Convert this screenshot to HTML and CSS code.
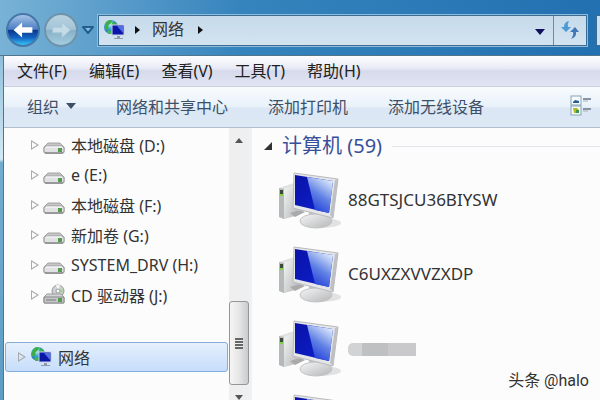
FILE: index.html
```html
<!DOCTYPE html>
<html lang="zh-CN">
<head>
    <meta charset="UTF-8">
    <meta name="viewport" content="width=device-width, initial-scale=1.0">
    <title>网络</title>
    <link rel="stylesheet" href="styles.css">
</head>
<body>
    <!-- Shared icons -->
    <svg class="sprite" aria-hidden="true">
        <defs>
            <linearGradient id="screen" x1="0" y1="0" x2="1" y2="1">
                <stop offset="0" stop-color="#0a12a8"/>
                <stop offset="1" stop-color="#0d22d0"/>
            </linearGradient>
            <linearGradient id="shine" x1="0.2" y1="1" x2="0.7" y2="0">
                <stop offset="0" stop-color="#1a35d8"/>
                <stop offset="0.5" stop-color="#5f80e4"/>
                <stop offset="1" stop-color="#dde9fc"/>
            </linearGradient>
            <linearGradient id="metal" x1="0" y1="0" x2="1" y2="1">
                <stop offset="0" stop-color="#f6f6f6"/>
                <stop offset="1" stop-color="#b4b6b8"/>
            </linearGradient>
            <radialGradient id="globe" cx="0.4" cy="0.3" r="0.7">
                <stop offset="0" stop-color="#c8f0f8"/>
                <stop offset="0.5" stop-color="#35a5d8"/>
                <stop offset="1" stop-color="#1659a8"/>
            </radialGradient>
            <linearGradient id="drive-top" x1="0" y1="0" x2="0" y2="1">
                <stop offset="0" stop-color="#bdbdbd"/>
                <stop offset="1" stop-color="#f4f4f4"/>
            </linearGradient>
        </defs>
        <symbol id="icon-drive" viewBox="0 0 22 20">
            <path d="M5 8h12l4 4v5q0 1-1 1H2q-1 0-1-1v-5z" fill="url(#drive-top)" stroke="#a6a6a6"/>
            <rect x="1" y="11" width="20" height="7" rx="2" fill="#e0e1e3" stroke="#96999c"/>
            <path d="M3 12h16" stroke="#fff"/>
            <rect x="15" y="13" width="4" height="4" fill="#589a50"/>
            <path d="M2 18h18" stroke="#77797b"/>
        </symbol>
        <symbol id="icon-cd" viewBox="0 0 22 20">
            <circle cx="15" cy="6" r="6" fill="#cdd2d4" stroke="#999"/>
            <path d="M15 6L13 0h4zM15 6l-2 6h4z" fill="#f5f8f5"/>
            <path d="M15 6l5-3v6z" fill="#b5cfae"/>
            <circle cx="15" cy="6" r="2" fill="#fff" stroke="#999"/>
            <path d="M4 9h14l3 3v6H1v-6z" fill="#d2d4d5" stroke="#999"/>
            <rect x="1" y="12" width="20" height="6" rx="1" fill="#c4c7c8" stroke="#858889"/>
            <path d="M3 15h10" stroke="#777"/>
            <rect x="15" y="13" width="4" height="4" fill="#589a50"/>
        </symbol>
        <symbol id="icon-network" viewBox="0 0 22 22">
            <circle cx="8" cy="8" r="7" fill="url(#globe)"/>
            <path d="M2 6q1-5 6-5 2 1 0 3T5 7l1 2-3 2q-2-2-1-5zM10 2q3 1 4 4l-3 1-2-2z" fill="#3fae49"/>
            <path d="M5 11l4 1v3q-4 0-5-2z" fill="#45b35a"/>
            <rect x="9" y="6" width="12" height="10" fill="#0b16a8" stroke="#c9d0e2"/>
            <path d="M14 7h6v7z" fill="#506fe4"/>
            <path d="M14 17h3v2h3v1h-9v-1h3z" fill="#909aa8"/>
        </symbol>
        <symbol id="icon-computer" viewBox="0 0 64 58">
            <ellipse cx="43" cy="51" rx="20" ry="5" fill="#e2e2e2"/>
            <path d="M1 16l15-5 5 4v28L6 47l-5-2z" fill="#e0e1e1"/>
            <path d="M1 16l5 1v30l-5-2z" fill="#b6b9ba"/>
            <path d="M6 17l14-5v31L6 47z" fill="url(#metal)"/>
            <rect x="2" y="18" width="3" height="4" fill="#3c4a3a"/>
            <rect x="2" y="22" width="3" height="2" fill="#7ed04e"/>
            <path d="M12 41l10-3 5 2-10 5z" fill="#aaa"/>
            <path d="M31 38l14 3v9H31z" fill="#bfc1c3"/>
            <ellipse cx="38" cy="49" rx="16" ry="7" fill="url(#metal)" stroke="#c4c4c4"/>
            <path d="M16 1l44 6-5 39-40-10z" fill="#e5e6e8" stroke="#b8babd"/>
            <path d="M57 8l3-1-5 39-3-3z" fill="#bec0c3"/>
            <path d="M17 3l38 6-4 32-34-8z" fill="url(#screen)"/>
            <path d="M29 5l26 4-4 32-14-3z" fill="url(#shine)"/>
        </symbol>
    </svg>

    <header class="titlebar">
        <button class="nav-button back" aria-label="后退">
            <svg viewBox="0 0 32 32"><path d="M6 16l9-8v5h11v6H15v5z" fill="#fff"/></svg>
        </button>
        <button class="nav-button forward" aria-label="前进">
            <svg viewBox="0 0 32 32"><path d="M26 16l-9-8v5H7v6h10v5z" fill="#c5dce8" stroke="#a8c8d8"/></svg>
        </button>
        <button class="plain history" aria-label="最近浏览的位置">
            <svg viewBox="0 0 12 8"><path d="M1 1h10L6 7z" fill="#8cc0e0" stroke="#215f91" stroke-width="2" stroke-linejoin="round"/></svg>
        </button>
        <div class="address">
            <svg class="icon"><use href="#icon-network"/></svg>
            <span class="crumb-arrow"></span>
            <a class="crumb" href="#">网络</a>
            <span class="crumb-arrow"></span>
            <button class="plain address-drop" aria-label="以前的位置"><span class="caret"></span></button>
            <button class="plain refresh" aria-label="刷新">
                <svg viewBox="0 0 20 20">
                    <path d="M9 1Q4 2 4 7H1l5 5 5-5H8Q7 4 9 1z" fill="#4c9ad6"/>
                    <path d="M11 19q6-2 5-7h3l-4-5-5 5h3q1 3-2 7z" fill="#4077b4"/>
                </svg>
            </button>
        </div>
        <input class="search" type="text" aria-label="搜索">
    </header>

    <div class="window">
        <nav class="menubar">
            <button class="plain">文件(F)</button>
            <button class="plain">编辑(E)</button>
            <button class="plain">查看(V)</button>
            <button class="plain">工具(T)</button>
            <button class="plain">帮助(H)</button>
        </nav>

        <div class="toolbar">
            <button class="plain organize">组织 <span class="caret"></span></button>
            <button class="plain">网络和共享中心</button>
            <button class="plain">添加打印机</button>
            <button class="plain">添加无线设备</button>
            <button class="plain view" aria-label="更改您的视图">
                <svg viewBox="0 0 22 22">
                    <rect x="1" y="1" width="10" height="9" fill="#f4f9fc" stroke="#88a3b3"/>
                    <path d="M3 7l2-2 4 1v2H3z" fill="#285c98"/>
                    <rect x="1" y="11" width="10" height="9" fill="#f4f9fc" stroke="#88a3b3"/>
                    <path d="M3 13h4l2 2v3H4z" fill="#b3b91f"/>
                    <path d="M6 15h3v3H6z" fill="#3d9550"/>
                    <path d="M13 4h8M13 14h8" stroke="#8793a0" stroke-width="2"/>
                    <path d="M13 6h5M13 16h5" stroke="#a6b1bd"/>
                </svg>
            </button>
        </div>

        <div class="content">
            <aside class="sidebar">
                <ul class="tree">
                    <li><span class="expander"></span><svg class="icon"><use href="#icon-drive"/></svg><a href="#">本地磁盘 (D:)</a></li>
                    <li><span class="expander"></span><svg class="icon"><use href="#icon-drive"/></svg><a href="#">e (E:)</a></li>
                    <li><span class="expander"></span><svg class="icon"><use href="#icon-drive"/></svg><a href="#">本地磁盘 (F:)</a></li>
                    <li><span class="expander"></span><svg class="icon"><use href="#icon-drive"/></svg><a href="#">新加卷 (G:)</a></li>
                    <li><span class="expander"></span><svg class="icon"><use href="#icon-drive"/></svg><a href="#">SYSTEM_DRV (H:)</a></li>
                    <li><span class="expander"></span><svg class="icon"><use href="#icon-cd"/></svg><a href="#">CD 驱动器 (J:)</a></li>
                    <li class="selected"><span class="expander"></span><svg class="icon"><use href="#icon-network"/></svg><a href="#">网络</a></li>
                </ul>
                <div class="scrollbar">
                    <button class="plain scroll-up" aria-label="向上滚动"></button>
                    <div class="track"><div class="thumb"><span class="grip"></span></div></div>
                    <button class="plain scroll-down" aria-label="向下滚动"></button>
                </div>
            </aside>

            <main class="files">
                <h2 class="group"><svg viewBox="0 0 8 8"><path d="M8 0v8H0z" fill="#333"/></svg>计算机 (59)</h2>
                <ul class="computers">
                    <li><svg><use href="#icon-computer"/></svg><a href="#">88GTSJCU36BIYSW</a></li>
                    <li><svg><use href="#icon-computer"/></svg><a href="#">C6UXZXVVZXDP</a></li>
                    <li><svg><use href="#icon-computer"/></svg><span class="masked"></span></li>
                    <li><svg><use href="#icon-computer"/></svg></li>
                </ul>
            </main>
        </div>
    </div>

    <div class="watermark">头条 @halo</div>
</body>
</html>
```

FILE: styles.css
```css
* {
    box-sizing: border-box;
}
body {
    margin: 0;
    height: 100vh;
    overflow: hidden;
    display: flex;
    flex-direction: column;
    font-family: "Noto Sans", "Noto Sans CJK SC", sans-serif;
    font-size: 16px;
    color: #333;
    background: linear-gradient(to right, #78b2d6, #3684bd 40%, #2270b0);
}
ul {
    list-style: none;
    margin: 0;
    padding: 0;
}
a {
    color: inherit;
    text-decoration: none;
    white-space: nowrap;
}
.sprite {
    position: absolute;
    width: 0;
    height: 0;
}
.plain {
    border: none;
    background: none;
    padding: 0;
    font: inherit;
    color: inherit;
    white-space: nowrap;
}
.icon {
    width: 22px;
    height: 22px;
    flex: none;
}
.caret {
    display: inline-block;
    border: 5px solid transparent;
    border-top: 6px solid currentColor;
    border-bottom: none;
}

/* Title bar */
.titlebar {
    height: 55px;
    flex: none;
    display: flex;
    align-items: center;
    padding: 5px 0 0 6px;
}
.nav-button {
    width: 34px;
    height: 34px;
    padding: 0;
    border-radius: 50%;
    flex: none;
}
.nav-button svg {
    display: block;
    width: 100%;
}
.back {
    border: 2px solid #4578a8;
    background: linear-gradient(#a5c2e6, #4b7dc4 48%, #08358c 50%, #1263c0 75%, #37c4f5);
}
.forward {
    margin-left: 4px;
    border: 2px solid #6e93ab;
    background: linear-gradient(#b8d2e0, #a3c4d6 48%, #86b0c8 50%, #a5cde0);
}
.history {
    width: 12px;
    margin: 0 4px;
}
.history svg {
    display: block;
    width: 12px;
}
.address {
    flex: 1;
    height: 31px;
    display: flex;
    align-items: center;
    padding-left: 4px;
    border: 1px solid #3b6d94;
    box-shadow: 0 0 0 1px #8fbcda;
    background: linear-gradient(#c5daeb, #d3e3f0);
}
.crumb {
    line-height: 20px;
    padding-bottom: 3px;
}
.crumb-arrow {
    margin: 0 12px 0 10px;
    border: 4px solid transparent;
    border-left: 5px solid #111;
    border-right: none;
}
.crumb-arrow:last-of-type {
    margin-left: 14px;
}
.address-drop {
    margin-left: auto;
    width: 26px;
    color: #10105c;
}
.address-drop .caret {
    vertical-align: middle;
}
.refresh {
    width: 33px;
    height: 100%;
    border-left: 1px solid #6d8ba5;
    display: flex;
    align-items: center;
    justify-content: center;
}
.refresh svg {
    width: 20px;
}
.search {
    flex: none;
    width: 4px;
    height: 31px;
    margin-left: 9px;
    padding: 0;
    border: 1px solid #3b6d94;
    border-right: none;
    border-radius: 0;
    background: #cfe0ee;
}

/* Window, with the glass frame showing on its left */
.window {
    flex: 1;
    min-height: 0;
    padding-left: 4px;
    display: flex;
    flex-direction: column;
    background: linear-gradient(to right, transparent 3px, #52758e 3px 4px, #fcfcfd 4px),
        linear-gradient(#8fbfdc, #d3e9f4 30%, #72add0 31%, #5c9dc6);
    border-top: 1px solid #52758e;
}
.menubar {
    height: 31px;
    flex: none;
    display: flex;
    align-items: center;
    gap: 22px;
    padding: 0 13px;
    color: #222;
    background: linear-gradient(#fdfdff, #e9ebf6 40%, #d6daeb 50%, #e0e4f3);
    border-bottom: 1px solid #c9cedf;
}
.toolbar {
    height: 41px;
    flex: none;
    display: flex;
    align-items: center;
    gap: 40px;
    padding: 0 8px 0 23px;
    color: #3d5068;
    background: linear-gradient(#f9fcfe, #e8f1fa 50%, #dbe7f4 52%, #dde8f5);
    border-bottom: 1px solid #b0bfd0;
}
.menubar .plain,
.toolbar .plain {
    padding-bottom: 2px;
}
.organize {
    display: flex;
    align-items: center;
    gap: 7px;
}
.view {
    margin-left: auto;
    width: 22px;
}
.view svg {
    display: block;
    width: 22px;
}
.content {
    flex: 1;
    min-height: 0;
    display: flex;
}

/* Navigation tree */
.sidebar {
    width: 248px;
    flex: none;
    display: flex;
    border-right: 3px solid #edf2f9;
}
.tree {
    flex: 1;
    padding: 2px 1px;
}
.tree li {
    height: 30px;
    display: flex;
    align-items: center;
    padding-left: 26px;
}
.expander {
    width: 8px;
    height: 10px;
    margin-right: 4px;
    flex: none;
    background: #aaa;
    clip-path: polygon(evenodd, 0 0, 100% 50%, 0 100%, 0 0, 1px 2px, 1px 8px, 6px 5px, 1px 2px);
}
.tree a {
    margin-left: 6px;
    padding-bottom: 1px;
}
.tree .selected {
    margin-top: 32px;
    padding-left: 12px;
    border: 1px solid #86add8;
    border-radius: 3px;
    background: linear-gradient(#e6f0fd, #c6ddfb);
}
.scrollbar {
    width: 20px;
    display: flex;
    flex-direction: column;
    align-items: center;
    background: #efeff0;
}
.scroll-up,
.scroll-down {
    height: 5px;
    border: 4px solid transparent;
}
.scroll-up {
    margin: 10px 0;
    border-bottom: 5px solid #555;
    border-top: none;
}
.scroll-down {
    margin-top: 10px;
    border-top: 5px solid #555;
    border-bottom: none;
}
.track {
    flex: 1;
    width: 100%;
    display: flex;
    align-items: flex-end;
}
.thumb {
    width: 100%;
    height: 36%;
    display: flex;
    align-items: center;
    justify-content: center;
    border: 1px solid #969696;
    border-radius: 3px;
    background: linear-gradient(to right, #f5f5f5, #e6e6e7 50%, #cbcbcd);
}
.grip {
    width: 8px;
    height: 11px;
    background: repeating-linear-gradient(#666 0 2px, #eee 2px 3px);
}

/* File list */
.files {
    flex: 1;
    min-width: 0;
    overflow: hidden;
    padding: 4px 0 0 12px;
}
.group {
    display: flex;
    align-items: center;
    margin: 0;
    font-size: 20px;
    font-weight: normal;
    line-height: 28px;
    color: #384f9a;
}
.group svg {
    width: 8px;
    margin-right: 10px;
}
.group::after {
    content: "";
    flex: 1;
    height: 1px;
    margin-left: 10px;
    background: #e2e5ea;
}
.computers {
    padding: 4px 0 0 14px;
    font-size: 17px;
}
.computers li {
    height: 74px;
    display: flex;
    align-items: center;
    gap: 6px;
}
.computers a {
    padding-bottom: 4px;
}
.computers svg {
    width: 64px;
    height: 58px;
    flex: none;
}
.masked {
    width: 68px;
    height: 13px;
    background: linear-gradient(to right, #d2d3d4 0 14px, #bfc0c2 14px 40px, #c9c8ca 40px);
    border-radius: 5px 0 0 5px;
}

.watermark {
    position: absolute;
    right: 11px;
    bottom: 9px;
    font-family: Roboto, "Noto Sans CJK SC", sans-serif;
    font-size: 16px;
    line-height: 20px;
    color: #333;
}
```
